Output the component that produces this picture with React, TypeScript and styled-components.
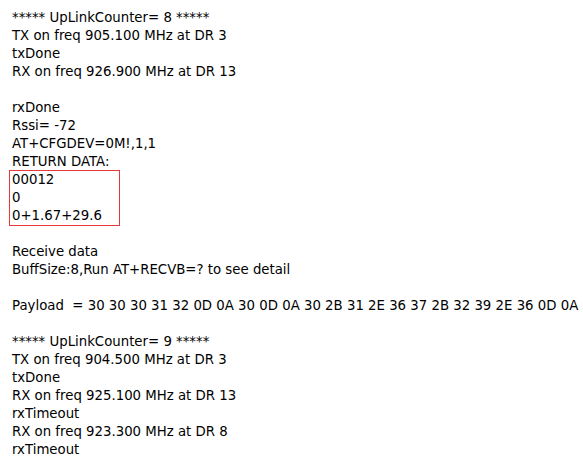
import React from "react";
import styled, { createGlobalStyle } from "styled-components";

const Global = createGlobalStyle`
  html, body { margin: 0; padding: 0; background: #ffffff; }
`;

const Log = styled.div`
  padding: 9px 0 0 12px;
  font-family: "DejaVu Sans", Verdana, sans-serif;
  font-size: 13.3px;
  line-height: 18px;
  color: #000;
  white-space: pre;
`;

const Line = styled.div`
  height: 18px;
`;

const Highlight = styled.div`
  width: fit-content;
  margin-left: -2px;
  padding: 0 17px 0 2px;
  outline: 1px solid #e8383d;
  outline-offset: 0;
`;

const before = [
  "***** UpLinkCounter= 8 *****",
  "TX on freq 905.100 MHz at DR 3",
  "txDone",
  "RX on freq 926.900 MHz at DR 13",
  "",
  "rxDone",
  "Rssi= -72",
  "AT+CFGDEV=0M!,1,1",
  "RETURN DATA:",
];
const boxed = ["00012", "0", "0+1.67+29.6"];
const after = [
  "",
  "Receive data",
  "BuffSize:8,Run AT+RECVB=? to see detail",
  "",
  "Payload  = 30 30 30 31 32 0D 0A 30 0D 0A 30 2B 31 2E 36 37 2B 32 39 2E 36 0D 0A",
  "",
  "***** UpLinkCounter= 9 *****",
  "TX on freq 904.500 MHz at DR 3",
  "txDone",
  "RX on freq 925.100 MHz at DR 13",
  "rxTimeout",
  "RX on freq 923.300 MHz at DR 8",
  "rxTimeout",
];

export default function App() {
  return (
    <>
      <Global />
      <Log>
        {before.map((t, i) => (
          <Line key={"b" + i}>{t}</Line>
        ))}
        <Highlight>
          {boxed.map((t, i) => (
            <Line key={"x" + i}>{t}</Line>
          ))}
        </Highlight>
        {after.map((t, i) => (
          <Line key={"a" + i}>{t}</Line>
        ))}
      </Log>
    </>
  );
}
